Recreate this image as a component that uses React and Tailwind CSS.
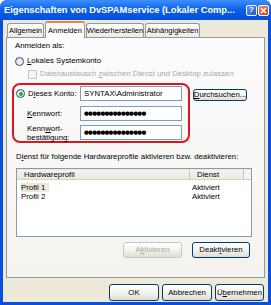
import React from "react";

// small XP-style controls
function Radio({ checked }) {
  return (
    <span className="w-[9px] h-[9px] rounded-full border border-[#1C5180] bg-gradient-to-br from-[#DCDCD7] to-white flex items-center justify-center shrink-0">
      {checked && <span className="w-[4px] h-[4px] rounded-full bg-[#2FA52F]" />}
    </span>
  );
}

function Btn({ children, disabled, className = "" }) {
  return (
    <div
      className={`flex items-center justify-center rounded-[3px] border bg-gradient-to-b from-white via-[#F4F3EE] to-[#DEDDD6] ${
        disabled ? "border-[#C9C7BA] text-[#ACA899]" : "border-[#003C74] text-black"
      } ${className}`}
    >
      {children}
    </div>
  );
}

function Input({ children, dots }) {
  return (
    <div className="w-[102px] h-[15px] border border-[#7F9DB9] bg-white flex items-center pl-[3px] overflow-hidden">
      {dots ? (
        <span className="text-[5.5px] tracking-[-0.7px] leading-none font-['DejaVu_Sans',sans-serif]">
          ●●●●●●●●●●●●●●●
        </span>
      ) : (
        <span>{children}</span>
      )}
    </div>
  );
}

export default function App() {
  return (
    <div className="w-[271px] h-[305px] flex flex-col rounded-t-[7px] overflow-hidden bg-[#0A4FDB] font-['Liberation_Sans',Arial,sans-serif] text-[7.8px] leading-[10px] text-black">
      {/* TITLE BAR */}
      <div className="h-[20px] shrink-0 flex items-center pl-[4px] pr-[2px] bg-gradient-to-b from-[#3D8FFA] via-[#0A5EEA] to-[#0250DC]">
        <span className="text-white font-bold text-[9.3px] whitespace-nowrap">
          Eigenschaften von DvSPAMservice (Lokaler Comp...
        </span>
        <div className="ml-auto flex gap-[1px]">
          <div className="w-[11px] h-[11px] rounded-[2px] border border-white bg-gradient-to-br from-[#5A94F5] to-[#1E57D8] flex items-center justify-center text-white font-bold text-[8px] leading-none">
            ?
          </div>
          <div className="w-[11px] h-[11px] rounded-[2px] border border-white bg-gradient-to-br from-[#E8865F] to-[#C8401C] flex items-center justify-center">
            <svg width="7" height="7" viewBox="0 0 7 7">
              <path d="M1 1 L6 6 M6 1 L1 6" stroke="white" strokeWidth="1.5" />
            </svg>
          </div>
        </div>
      </div>

      {/* BODY */}
      <div className="flex-1 mx-[3px] mb-[3px] bg-[#ECE9D8] flex flex-col px-[3px] pt-[2px]">
        {/* TABS */}
        <div className="h-[15px] flex items-end pl-[1px] gap-[1px] relative z-10 text-[7.5px]">
          <div className="w-[37px] h-[14px] border border-b-0 border-[#919B9C] rounded-t-[3px] bg-gradient-to-b from-white to-[#ECEBE6] flex items-center justify-center">
            Allgemein
          </div>
          <div className="w-[40px] h-[17px] -mb-px border border-b-0 border-[#919B9C] border-t-[#E68B2C] border-t-2 rounded-t-[3px] bg-[#FCFCFE] flex items-center justify-center">
            Anmelden
          </div>
          <div className="w-[58px] h-[14px] border border-b-0 border-[#919B9C] rounded-t-[3px] bg-gradient-to-b from-white to-[#ECEBE6] flex items-center justify-center">
            Wiederherstellen
          </div>
          <div className="w-[55px] h-[14px] border border-b-0 border-[#919B9C] rounded-t-[3px] bg-gradient-to-b from-white to-[#ECEBE6] flex items-center justify-center">
            Abhängigkeiten
          </div>
        </div>

        {/* TAB PANEL */}
        <div className="h-[241px] border border-[#919B9C] bg-gradient-to-b from-[#FCFCFE] to-[#F4F3EE] flex flex-col pl-[8px]">
          <div className="mt-[3px] h-[10px]">Anmelden als:</div>

          <div className="mt-[5px] h-[10px] flex items-center gap-[3px]">
            <Radio />
            <span>
              <u>L</u>okales Systemkonto
            </span>
          </div>

          <div className="mt-[3px] h-[10px] flex items-center gap-[3px] pl-[13px] text-[#ACA899]">
            <span className="w-[9px] h-[9px] border border-[#CAC8BB] bg-[#F4F4F0] shrink-0" />
            <span>
              Datenaustausch <u>z</u>wischen Dienst und Desktop zulassen
            </span>
          </div>

          {/* ACCOUNT ROWS */}
          <div className="mt-[4px] flex items-start">
            <div className="-ml-[3px] w-[178px] h-[60px] border-2 border-[#E0141E] rounded-[8px] flex flex-col pl-[2px] pt-[1px]">
              <div className="flex items-center h-[15px]">
                <div className="w-[64px] flex items-center gap-[3px]">
                  <Radio checked />
                  <span>
                    D<u>i</u>eses Konto:
                  </span>
                </div>
                <Input>SYNTAX\Administrator</Input>
              </div>
              <div className="mt-[5px] flex items-center h-[15px]">
                <div className="w-[64px] pl-[11px]">
                  <u>K</u>ennwort:
                </div>
                <Input dots />
              </div>
              <div className="mt-[4px] flex items-center h-[15px]">
                <div className="w-[64px] pl-[11px] leading-[9px] pt-[1px]">
                  Kenn<u>w</u>ort-
                  <br />
                  bestätigung:
                </div>
                <Input dots />
              </div>
            </div>
            <Btn className="ml-[3px] mt-[6px] w-[54px] h-[12px]">
              <span>
                <u>D</u>urchsuchen...
              </span>
            </Btn>
          </div>

          <div className="mt-[9px] h-[10px] pl-[1px]">
            D<u>i</u>enst für folgende Hardwareprofile aktivieren bzw. deaktivieren:
          </div>

          {/* LIST VIEW */}
          <div className="mt-[6px] ml-[1px] w-[236px] h-[69px] border border-[#7F9DB9] bg-white flex flex-col">
            <div className="h-[11px] flex bg-[#EBEADB] border-b border-[#D6D2C2] pt-[1px]">
              <div className="w-[173px] pl-[7px] border-r border-[#C7C5B2] bg-gradient-to-b from-[#F4F3EE] to-[#EBEADB] leading-[9px]">
                Hardwareprofil
              </div>
              <div className="w-[54px] pl-[7px] border-r border-[#C7C5B2] bg-gradient-to-b from-[#F4F3EE] to-[#EBEADB] leading-[9px]">
                Dienst
              </div>
              <div className="flex-1 bg-[#F4F3EE]" />
            </div>
            <div className="mt-[3px] h-[9px] flex leading-[9px]">
              <div className="w-[175px] pl-[4px]">
                <span className="bg-[#ECE9D8] pr-[4px]">Profil 1</span>
              </div>
              <div>Aktiviert</div>
            </div>
            <div className="h-[9px] flex leading-[9px]">
              <div className="w-[175px] pl-[4px]">Profil 2</div>
              <div>Aktiviert</div>
            </div>
          </div>

          <div className="mt-[5px] flex pl-[108px] gap-[10px]">
            <Btn disabled className="w-[59px] h-[16px]">
              <span>
                A<u>k</u>tivieren
              </span>
            </Btn>
            <Btn className="w-[58px] h-[16px]">
              <span>
                Deakt<u>i</u>vieren
              </span>
            </Btn>
          </div>
        </div>

        {/* BOTTOM BUTTONS */}
        <div className="mt-[6px] flex justify-end gap-[3px] pr-[1px]">
          <Btn className="w-[50px] h-[17px]">OK</Btn>
          <Btn className="w-[50px] h-[17px]">Abbrechen</Btn>
          <Btn className="w-[49px] h-[17px]">
            <span>
              Ü<u>b</u>ernehmen
            </span>
          </Btn>
        </div>
      </div>
    </div>
  );
}
